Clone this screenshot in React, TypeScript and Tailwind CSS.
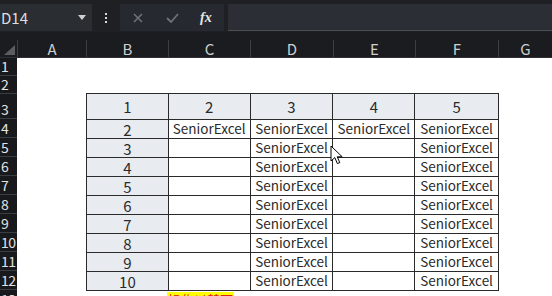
import React from 'react'

const cols = [
  { label: 'A', w: 'w-[69px]' },
  { label: 'B', w: 'w-[82px]' },
  { label: 'C', w: 'w-[82px]' },
  { label: 'D', w: 'w-[83px]' },
  { label: 'E', w: 'w-[82px]' },
  { label: 'F', w: 'w-[83px]' },
  { label: 'G', w: 'w-[54px]' },
]

const rowHeights = ['h-[18px]', 'h-[18px]', 'h-[25px]', 'h-[19px]', 'h-[19px]', 'h-[19px]', 'h-[19px]', 'h-[19px]', 'h-[19px]', 'h-[19px]', 'h-[19px]', 'h-[19px]', 'h-[19px]']

const S = 'SeniorExcel'
const body = [
  ['2', S, S, S, S],
  ['3', '', S, '', S],
  ['4', '', S, '', S],
  ['5', '', S, '', S],
  ['6', '', S, '', S],
  ['7', '', S, '', S],
  ['8', '', S, '', S],
  ['9', '', S, '', S],
  ['10', '', S, '', S],
]

function Cursor() {
  return (
    <svg className="absolute left-[330px] top-[145px]" width="14" height="21" viewBox="0 0 14 21">
      <path d="M1 1 L1 16 L4.8 12.6 L7.4 18.6 L9.8 17.6 L7.2 11.8 L12.2 11.8 Z" fill="#fff" stroke="#000" strokeWidth="1" strokeLinejoin="round" />
    </svg>
  )
}

export default function App() {
  return (
    <div className="relative w-[552px] h-[296px] overflow-hidden bg-white font-['Noto_Sans_CJK_SC','Noto_Sans',sans-serif]">
      {/* formula bar */}
      <div className="h-[32px] bg-[#1e2024] flex items-start pt-[4px]">
        <div className="w-[92px] h-[27px] bg-[#2a2d32] flex items-center justify-between pl-[1px] pr-[6px]">
          <span className="text-[15px] text-[#dedede] leading-none">D14</span>
          <svg width="8" height="5" viewBox="0 0 8 5"><path d="M0 0 L8 0 L4 5 Z" fill="#d0d0d0" /></svg>
        </div>
        <div className="w-[28px] h-[27px] flex flex-col items-center justify-center gap-[2px]">
          <span className="w-[2px] h-[2px] bg-[#d8d8d8]" />
          <span className="w-[2px] h-[2px] bg-[#d8d8d8]" />
          <span className="w-[2px] h-[2px] bg-[#d8d8d8]" />
        </div>
        <div className="w-[104px] h-[27px] bg-[#262930] flex items-center">
          <svg className="ml-[13px]" width="10" height="10" viewBox="0 0 10 10"><path d="M1 1 L9 9 M9 1 L1 9" stroke="#6e7176" strokeWidth="1.6" /></svg>
          <svg className="ml-[23px]" width="13" height="10" viewBox="0 0 13 10"><path d="M1 5 L5 9 L12 1" stroke="#6e7176" strokeWidth="1.8" fill="none" /></svg>
          <span className="ml-[21px] text-[14px] italic font-bold text-[#e6e6e6] font-['Liberation_Serif',serif] leading-none">fx</span>
        </div>
        <div className="ml-[4px] flex-1 h-[27px] bg-[#2b2e34] border-b border-[#4a4d52]" />
      </div>

      {/* column headers */}
      <div className="h-[26px] bg-[#1a1c1f] flex items-end border-b border-[#2e3034]">
        <div className="w-[17px] h-[25px] flex items-end justify-end pb-[2px] pr-[2px]">
          <svg width="11" height="10" viewBox="0 0 11 10"><path d="M11 0 L11 10 L0 10 Z" fill="#5a5d62" /></svg>
        </div>
        {cols.map(c => (
          <div key={c.label} className={`${c.w} h-[17px] shrink-0 border-l border-[#3c3f44] flex items-center justify-center text-[15px] text-[#cfcfcf] leading-none`}>
            {c.label}
          </div>
        ))}
      </div>

      <div className="flex">
        {/* row headers */}
        <div className="w-[17px] shrink-0 bg-[#17191c] flex flex-col">
          {rowHeights.map((h, i) => (
            <div key={i} className={`${h} shrink-0 border-b border-[#3a3d42] flex items-end pl-[1px] pb-[2px] text-[14px] leading-none text-[#e2e2e2] tracking-[-0.5px]`}>
              {i + 1}
            </div>
          ))}
        </div>

        {/* sheet */}
        <div className="flex-1 pt-[35px] pl-[69px]">
          <div className="w-[413px] border border-[#2a2a2a]">
            <div className="flex h-[26px] border-b border-[#2a2a2a]">
              {['1', '2', '3', '4', '5'].map((v, i) => (
                <div key={v} className={`${i === 2 || i === 4 ? 'w-[83px]' : 'w-[82px]'} ${i < 4 ? 'border-r border-[#2a2a2a]' : ''} bg-[#e8ecf0] flex items-center justify-center text-[15px] text-[#2a2a2a] leading-none`}>
                  {v}
                </div>
              ))}
            </div>
            {body.map((row, r) => (
              <div key={r} className={`flex ${r < body.length - 1 ? 'h-[19px] border-b border-[#2a2a2a]' : 'h-[18px]'}`}>
                {row.map((v, i) => (
                  <div key={i} className={`${i === 2 || i === 4 ? 'w-[83px]' : 'w-[82px]'} ${i < 4 ? 'border-r border-[#2a2a2a]' : ''} ${i === 0 ? 'bg-[#e8ecf0] text-[15px]' : 'bg-white text-[13.5px]'} flex items-center justify-center text-[#2a2a2a] leading-none whitespace-nowrap`}>
                    {v}
                  </div>
                ))}
              </div>
            ))}
          </div>
          <div className="flex pl-[81px] pt-[1px]">
            <span className="block bg-[#ffff00] text-[#e0201b] text-[13px] leading-[13px] pt-[1px] px-[1px] h-[16px] whitespace-nowrap">操作以替而</span>
          </div>
        </div>
      </div>

      <Cursor />
    </div>
  )
}
